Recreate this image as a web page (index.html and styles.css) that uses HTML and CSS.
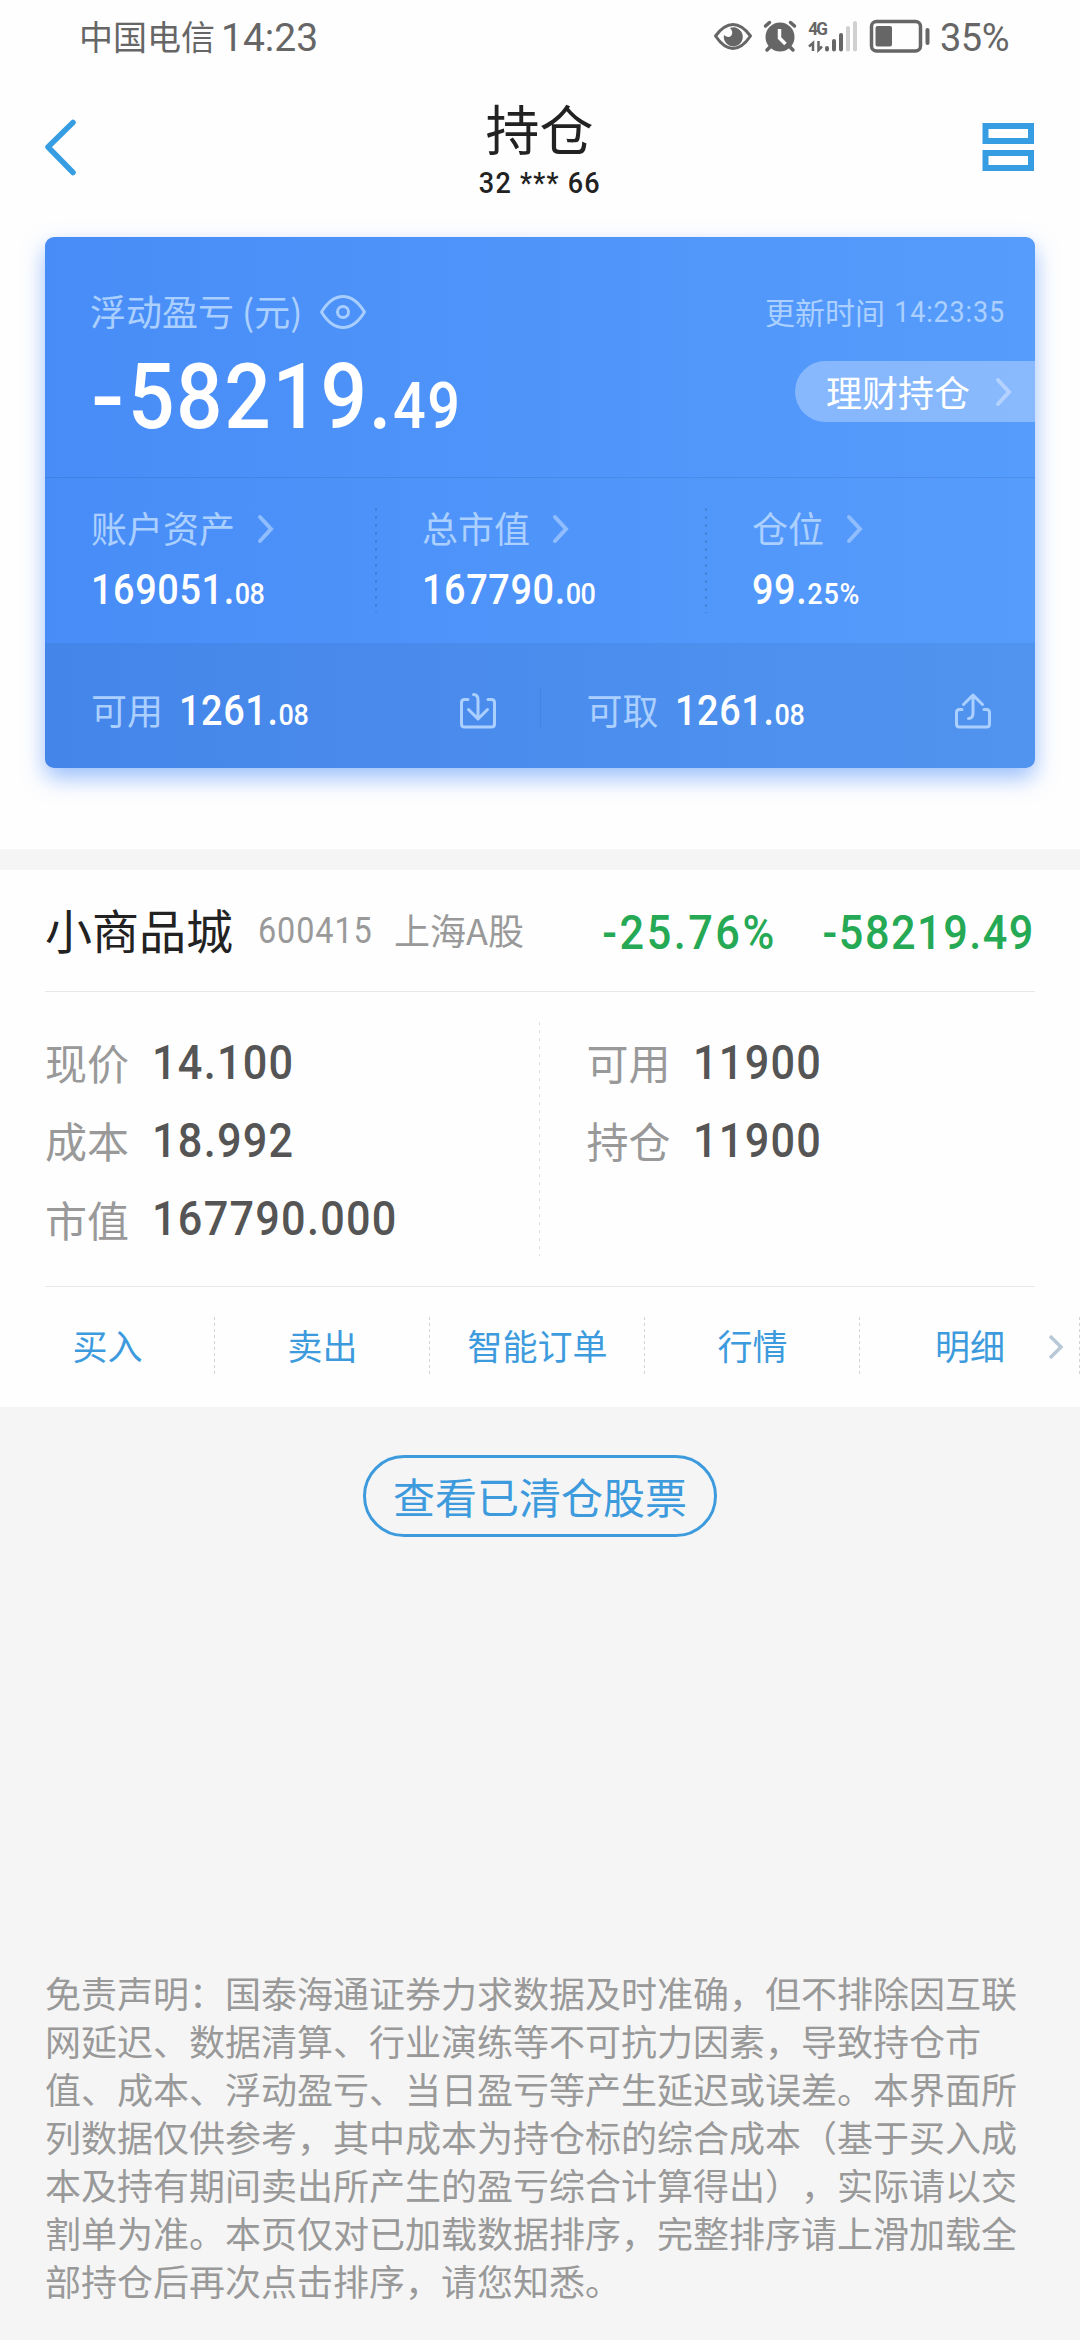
FILE: index.html
```html
<!DOCTYPE html>
<html lang="zh-CN">
<head>
    <meta charset="UTF-8">
    <meta name="viewport" content="width=device-width, initial-scale=1.0">
    <title>持仓</title>
    <link rel="stylesheet" href="styles.css">
</head>
<body>
    <!-- 状态栏 -->
    <div class="status-bar">
        <span class="carrier">中国电信</span>
        <span class="clock">14:23</span>
        <svg class="status-icons" width="230" height="40" viewBox="706 16 230 40">
            <path d="M715.500 36 Q724 24.500 733 24.500 Q742 24.500 750.500 36 Q742 48.500 733 48.500 Q724 48.500 715.500 36Z" fill="none" stroke="#666" stroke-width="3" stroke-linejoin="round"/>
            <path d="M730 28 A9.500 9.500 0 1 1 724 35 Q728 38.500 731 36 Q734 32 730 28Z" fill="#666"/>
            <circle cx="780" cy="37" r="14.500" fill="#666"/>
            <path d="M765.500 26 L769.500 22.500 M794.500 26 L790.500 22.500 M770.500 46.500 L767 50 M789.500 46.500 L793 50" stroke="#666" stroke-width="3.500" stroke-linecap="round"/>
            <path d="M779.500 29 V38 L785.500 44" fill="none" stroke="#fff" stroke-width="3.500"/>
            <text class="net-type" x="898" y="35">4G</text>
            <path d="M813 51 V43 L809 46.500 M818.500 41 V50 L822 46.500" fill="none" stroke="#666" stroke-width="2.500"/>
            <path d="M827 48 V49.500 M834 41 V49.500 M841 35 V49.500" stroke="#666" stroke-width="4" stroke-linecap="round"/>
            <path d="M848 28 V49.500 M855 23 V49.500" stroke="#d0d0d0" stroke-width="4" stroke-linecap="round"/>
            <rect x="871.500" y="21.500" width="49" height="29.500" rx="5" fill="none" stroke="#666" stroke-width="3.500"/>
            <rect x="875.500" y="26" width="16.500" height="20.500" rx="2" fill="#666"/>
            <path d="M927.500 30 V43" stroke="#666" stroke-width="4" stroke-linecap="round"/>
        </svg>
        <span class="battery">35%</span>
    </div>

    <!-- 标题栏 -->
    <div class="nav-bar">
        <svg class="back" width="36" height="60" viewBox="0 0 36 60">
            <path d="M30 5.500 L5 30 L30 55.500" fill="none" stroke="#369de2" stroke-width="5.500" stroke-linecap="round" stroke-linejoin="round"/>
        </svg>
        <div class="title-box">
            <div class="title">持仓</div>
            <div class="account">32 *** 66</div>
        </div>
        <svg class="layout-icon" width="52" height="50" viewBox="0 0 52 50">
            <rect x="3.500" y="4" width="45.500" height="15" fill="none" stroke="#369de2" stroke-width="6"/>
            <rect x="3.500" y="31" width="45.500" height="15" fill="none" stroke="#369de2" stroke-width="6"/>
        </svg>
    </div>

    <!-- 资产卡片 -->
    <div class="card-wrap">
        <div class="card">
            <div class="profit">
                <div class="profit-head">
                    <span class="label">浮动盈亏 (元)</span>
                    <svg class="eye" width="48" height="36" viewBox="0 0 48 36">
                        <path d="M2.500 18 Q12 2.500 24 2.500 Q36 2.500 45.500 18 Q36 33.500 24 33.500 Q12 33.500 2.500 18Z" fill="none" stroke="#a8ceff" stroke-width="3" stroke-linejoin="round"/>
                        <circle cx="24" cy="18" r="5.500" fill="none" stroke="#a8ceff" stroke-width="3"/>
                    </svg>
                    <span class="update">更新时间</span>
                    <span class="update-time">14:23:35</span>
                </div>
                <div class="profit-body">
                    <div class="total"><span class="minus">-</span>58219.<small>49</small></div>
                    <div class="pill">
                        <span>理财持仓</span>
                        <svg width="20" height="30" viewBox="0 0 20 30"><path d="M4 3 L15 15 L4 27" class="arrow"/></svg>
                    </div>
                </div>
            </div>
            <div class="stats">
                <div class="stat">
                    <div class="stat-name">账户资产<svg width="20" height="30" viewBox="0 0 20 30"><path d="M4 3 L15 15 L4 27" class="arrow"/></svg></div>
                    <div class="num">169051.<small>08</small></div>
                </div>
                <div class="stat">
                    <div class="stat-name">总市值<svg width="20" height="30" viewBox="0 0 20 30"><path d="M4 3 L15 15 L4 27" class="arrow"/></svg></div>
                    <div class="num">167790.<small>00</small></div>
                </div>
                <div class="stat">
                    <div class="stat-name">仓位<svg width="20" height="30" viewBox="0 0 20 30"><path d="M4 3 L15 15 L4 27" class="arrow"/></svg></div>
                    <div class="num percent">99.<small>25%</small></div>
                </div>
            </div>
            <div class="cash">
                <div class="cash-item">
                    <span class="label">可用</span>
                    <span class="num">1261.<small>08</small></span>
                    <svg width="38" height="38" viewBox="0 0 38 38">
                        <path d="M9 7.500 H5.500 Q2.500 7.500 2.500 10.500 V32 Q2.500 35 5.500 35 H32.500 Q35.500 35 35.500 32 V10.500 Q35.500 7.500 32.500 7.500 H29 M14.500 2.500 Q19 2.500 19 8 V26 M9.500 17.500 L19 27 L28.500 17.500" class="cash-icon"/>
                    </svg>
                </div>
                <div class="cash-line"></div>
                <div class="cash-item">
                    <span class="label">可取</span>
                    <span class="num">1261.<small>08</small></span>
                    <svg width="38" height="38" viewBox="0 0 38 38">
                        <path d="M8 17.500 H5.500 Q2.500 17.500 2.500 20.500 V32 Q2.500 35 5.500 35 H32.500 Q35.500 35 35.500 32 V20.500 Q35.500 17.500 32.500 17.500 H30 M14.500 26.500 Q19 26.500 19 21 V4 M9.500 12.500 L19 3 L28.500 12.500" class="cash-icon"/>
                    </svg>
                </div>
            </div>
        </div>
    </div>

    <!-- 持仓股票 -->
    <div class="stock">
        <div class="stock-head">
            <span class="stock-name">小商品城</span>
            <span class="stock-code">600415</span>
            <span class="stock-market">上海A股</span>
            <span class="rate">-25.76%</span>
            <span class="loss">-58219.49</span>
        </div>
        <div class="detail">
            <div class="detail-col">
                <div class="row"><span>现价</span><b>14.100</b></div>
                <div class="row"><span>成本</span><b>18.992</b></div>
                <div class="row"><span>市值</span><b>167790.000</b></div>
            </div>
            <div class="detail-line"></div>
            <div class="detail-col">
                <div class="row"><span>可用</span><b>11900</b></div>
                <div class="row"><span>持仓</span><b>11900</b></div>
            </div>
        </div>
        <div class="actions">
            <div class="action">买入</div>
            <div class="action">卖出</div>
            <div class="action">智能订单</div>
            <div class="action">行情</div>
            <div class="action">明细</div>
            <svg class="more" width="20" height="30" viewBox="0 0 20 30"><path d="M3 4 L14 15 L3 26" fill="none" stroke="#b9c8d6" stroke-width="3.500"/></svg>
        </div>
    </div>

    <div class="cleared">查看已清仓股票</div>

    <!-- 免责声明 -->
    <div class="notice">免责声明：国泰海通证券力求数据及时准确，但不排除因互联<br>网延迟、数据清算、行业演练等不可抗力因素，导致持仓市<br>值、成本、浮动盈亏、当日盈亏等产生延迟或误差。本界面所<br>列数据仅供参考，其中成本为持仓标的综合成本（基于买入成<br>本及持有期间卖出所产生的盈亏综合计算得出），实际请以交<br>割单为准。本页仅对已加载数据排序，完整排序请上滑加载全<br>部持仓后再次点击排序，请您知悉。</div>
</body>
</html>
```
FILE: styles.css
```css
* {
    box-sizing: border-box;
}
body {
    margin: 0;
    width: 1080px;
    height: 2340px;
    background: #f5f5f5;
    font-family: "Noto Sans CJK SC", sans-serif;
    font-size: 36px;
    overflow: hidden;
    white-space: nowrap;
}
svg {
    flex: none;
}

/* 状态栏 */
.status-bar {
    display: flex;
    align-items: center;
    height: 72px;
    padding-left: 79px;
    background: #fefefe;
    color: #666;
}
.carrier {
    width: 142px;
    font-size: 34px;
    line-height: 34px;
}
.clock {
    width: 485px;
    font: 400 39px/40px Roboto, sans-serif;
    padding-top: 4px;
}
.net-type {
    font: 700 19px Roboto, sans-serif;
    fill: #666;
    transform: scaleX(0.9);
    letter-spacing: -2px;
}
.battery {
    font: 400 38px/40px Roboto, sans-serif;
    letter-spacing: -0.5px;
    padding: 4px 0 0 4px;
}

/* 标题栏 */
.nav-bar {
    display: flex;
    justify-content: space-between;
    height: 165px;
    padding: 0 46px 0 43px;
    background: #fefefe;
}
.back {
    margin-top: 45px;
}
.title-box {
    display: flex;
    flex-direction: column;
    align-items: center;
    padding: 29px 0 0 18px;
    color: #222;
}
.title {
    font-size: 54px;
    line-height: 54px;
}
.account {
    margin-top: 10px;
    font: 500 30px/36px Roboto, sans-serif;
    letter-spacing: 1.4px;
    transform: scaleX(0.9);
}
.layout-icon {
    margin-top: 50px;
}

/* 资产卡片 */
.card-wrap {
    height: 612px;
    padding: 0 45px;
    background: #fefefe;
}
.card {
    height: 531px;
    border-radius: 9px;
    background: linear-gradient(90deg, #488df7, #569cfc);
    box-shadow: 0 10px 22px rgba(75, 140, 250, 0.55);
    color: #fff;
}
.label, .update, .update-time, .stat-name {
    color: #abd0ff;
}
.arrow {
    fill: none;
    stroke: #8fbdfd;
    stroke-width: 4;
    stroke-linecap: round;
}
.pill .arrow {
    stroke: #b4d2fd;
}
.profit {
    height: 241px;
    border-bottom: 1px solid rgba(0, 0, 0, 0.08);
}
.profit-head {
    display: flex;
    align-items: center;
    padding: 55px 30px 0 45px;
    height: 94px;
}
.profit-head .label {
    width: 229px;
    line-height: 36px;
    padding-bottom: 3px;
}
.update {
    margin-left: auto;
    margin-right: -3px;
    font-size: 30px;
    line-height: 34px;
    padding-bottom: 2px;
}
.update-time {
    font: 400 30px/34px Roboto, sans-serif;
    letter-spacing: 0.9px;
    transform: scaleX(0.9);
    transform-origin: right;
}
.profit-body {
    display: flex;
    justify-content: space-between;
    padding: 30px 0 0 46px;
}
.total {
    font: 500 91px/66px Roboto, sans-serif;
    letter-spacing: 1.8px;
    padding-top: 3px;
    transform: scaleX(0.9);
    transform-origin: left;
}
.total .minus {
    display: inline-block;
    width: 41px;
    transform: scaleX(1.2);
    transform-origin: left;
}
.total small {
    font-size: 64px;
    line-height: 1px;
    letter-spacing: 1.5px;
}
.pill {
    display: flex;
    align-items: center;
    width: 240px;
    height: 61px;
    padding-left: 31px;
    border-radius: 31px 0 0 31px;
    background: rgba(255, 255, 255, 0.3);
}
.pill span {
    width: 168px;
    line-height: 36px;
    padding-bottom: 2px;
}
.stats {
    display: grid;
    grid-template-columns: repeat(3, 330px);
    height: 165px;
    padding-top: 30px;
}
.stat {
    height: 105px;
    padding-left: 46px;
}
.stat + .stat {
    padding-left: 47px;
    background: repeating-linear-gradient(rgba(0, 0, 0, 0.13) 0 3px, transparent 3px 8px) -1px 0 / 3px 100% no-repeat;
}
.stat-name {
    display: flex;
    align-items: center;
    line-height: 36px;
    padding-top: 1px;
}
.stat-name svg {
    margin: 3px 0 0 21px;
}
.num {
    font: 500 42px/42px Roboto, sans-serif;
    letter-spacing: 0.7px;
    transform: scaleX(0.9);
    transform-origin: left;
}
.num small {
    font-size: 30px;
    line-height: 30px;
    letter-spacing: -0.6px;
}
.num.percent small {
    letter-spacing: 0.8px;
}
.stat .num {
    margin-top: 24px;
}
.cash {
    display: flex;
    height: 125px;
    padding-top: 4px;
    align-items: center;
    background: rgba(0, 0, 0, 0.05);
    border-radius: 0 0 9px 9px;
}
.cash-item {
    flex: 1;
    display: flex;
    align-items: center;
    padding: 6px 43px 0 46px;
}
.cash-item .label {
    line-height: 36px;
    margin-right: 16px;
    padding-bottom: 4px;
}
.cash-item svg {
    margin-left: auto;
}
.cash-line {
    width: 1px;
    height: 42px;
    background: rgba(0, 0, 0, 0.06);
}
.cash-icon {
    fill: none;
    stroke: #abd0ff;
    stroke-width: 3;
    stroke-linecap: round;
    stroke-linejoin: round;
}

/* 持仓股票 */
.stock {
    height: 558px;
    background: #fefefe;
    border-top: 21px solid #f5f5f5;
}
.stock-head {
    display: flex;
    align-items: center;
    height: 122px;
    margin: 0 45px;
    border-bottom: 1px solid #e8e8e8;
}
.stock-name {
    width: 213px;
    font-size: 47px;
    line-height: 50px;
    padding-bottom: 3px;
    color: #222;
}
.stock-code {
    width: 136px;
    font: 400 36px/36px Roboto, sans-serif;
    letter-spacing: 1px;
    color: #999;
    transform: scaleX(0.9);
    transform-origin: left;
}
.stock-market {
    line-height: 36px;
    padding-bottom: 4px;
    color: #999;
}
.rate, .loss {
    font: 500 48px/48px Roboto, sans-serif;
    letter-spacing: 1.7px;
    color: #25a955;
    padding-top: 4px;
    transform: scaleX(0.9);
    transform-origin: right;
}
.rate {
    margin-left: auto;
    letter-spacing: 2.8px;
}
.loss {
    margin-left: 22px;
}
.detail {
    display: flex;
    height: 295px;
    margin: 0 45px;
    padding-top: 30px;
    border-bottom: 1px solid #e8e8e8;
}
.detail-col {
    width: 495px;
    padding-top: 2px;
}
.detail-col + .detail-line + .detail-col {
    padding-left: 46px;
}
.detail-line {
    width: 1px;
    height: 234px;
    background: repeating-linear-gradient(#e0e0e0 0 3px, transparent 3px 8px);
}
.row {
    display: flex;
    align-items: center;
    height: 78px;
}
.row span {
    width: 107px;
    font-size: 42px;
    line-height: 42px;
    padding-bottom: 3px;
    color: #999;
}
.row:nth-child(3) span {
    padding-bottom: 0;
}
.row b {
    font: 500 48px/48px Roboto, sans-serif;
    letter-spacing: 1.4px;
    color: #555;
    transform: scaleX(0.9);
    transform-origin: left;
}
.actions {
    position: relative;
    display: grid;
    grid-template-columns: 215px 215px 215px 215px 220px;
    padding-top: 30px;
}
.action {
    height: 57px;
    font-size: 35px;
    line-height: 56px;
    text-align: center;
    color: #3d9bdd;
    background: repeating-linear-gradient(#d4d4d4 0 3px, transparent 3px 6px) right / 1px 100% no-repeat;
}
.more {
    position: absolute;
    right: 13px;
    top: 45px;
}

/* 查看已清仓 */
.cleared {
    width: 354px;
    height: 82px;
    margin: 48px auto 0;
    border: 3px solid #3d9bdd;
    border-radius: 41px;
    font-size: 42px;
    line-height: 76px;
    text-align: center;
    color: #3d9bdd;
}

/* 免责声明 */
.notice {
    margin: 431px 45px 0;
    line-height: 48px;
    color: #999;
    text-spacing-trim: space-all;
}
```
